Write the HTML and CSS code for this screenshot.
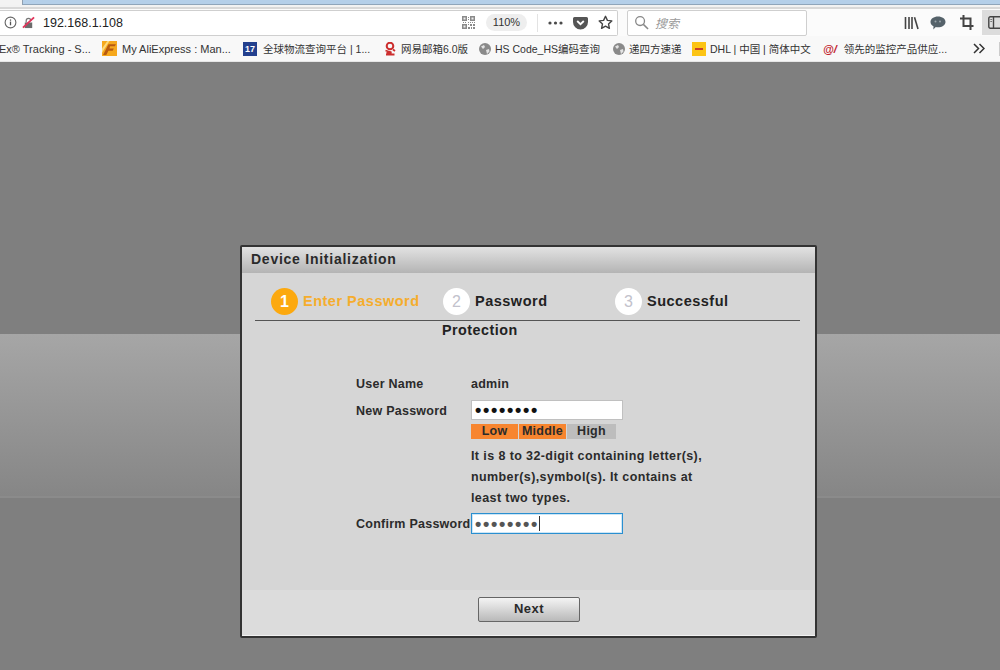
FILE: index.html
```html
<!DOCTYPE html>
<html lang="en">
<head>
<meta charset="utf-8">
<title>Device Initialization</title>
<link rel="stylesheet" href="styles.css">
</head>
<body>
<header class="browser">
  <div class="tabstrip"><div class="tabstrip-gap"></div><div class="tabstrip-blue"></div></div>
  <div class="navbar">
    <div class="urlbar">
      <svg class="ic-info" width="13" height="13" viewBox="0 0 14 14"><circle cx="7" cy="7" r="5.8" fill="none" stroke="#666" stroke-width="1.2"/><rect x="6.300" y="6" width="1.400" height="4" fill="#555"/><rect x="6.300" y="3.700" width="1.400" height="1.400" fill="#555"/></svg>
      <svg class="ic-lock" width="13" height="13" viewBox="0 0 14 14"><path d="M3 13V7h8v6z" fill="#6c6c6c"/><path d="M4.500 7V5a2.500 2.500 0 0 1 5 0" fill="none" stroke="#777" stroke-width="1.300"/><path d="M1 12.500 13 1.500" stroke="#e2335a" stroke-width="2"/></svg>
      <span class="url">192.168.1.108</span>
      <svg class="ic-qr" width="13" height="13" viewBox="0 0 13 13"><path d="M0 0h5v5H0zM8 0h5v5H8zM0 8h5v5H0z" fill="#8a8a8a"/><path d="M1.500 1.500h2v2h-2zM9.500 1.500h2v2h-2zM1.500 9.500h2v2h-2z" fill="#eee"/><path d="M6 1h1v1H6zM6 3h1v1H6zM1 6h1v1H1zM3 6h1v1H3zM6 6h1v1H6zM8 6h1v1H8zM10 6h1v1h-1zM12 6h1v1h-1zM6 8h1v1H6zM8 8h2v2H8zM11 8h2v2h-2zM6 11h2v2H6zM9 11h1v2H9zM11 11h2v2h-2z" fill="#8a8a8a"/></svg>
      <span class="zoom-pill">110%</span>
      <span class="url-sep"></span>
      <svg class="ic-dots" width="15" height="4" viewBox="0 0 15 4"><circle cx="2" cy="2" r="1.600" fill="#4a4a4a"/><circle cx="7.500" cy="2" r="1.600" fill="#4a4a4a"/><circle cx="13" cy="2" r="1.600" fill="#4a4a4a"/></svg>
      <svg class="ic-pocket" width="15" height="14" viewBox="0 0 15 14"><path d="M1.500 1h12A1.500 1.500 0 0 1 15 2.500V6a7.500 7.500 0 0 1-15 0V2.500A1.500 1.500 0 0 1 1.500 1z" fill="#555"/><path d="M4.200 5l3.300 3.200L10.800 5" fill="none" stroke="#fff" stroke-width="1.800"/></svg>
      <svg class="ic-star" width="15" height="15" viewBox="0 0 15 15"><path d="M7.500 1.300 9.400 5.400l4.400.5-3.300 3 .9 4.400-3.900-2.200-3.900 2.200.9-4.400-3.300-3 4.400-.5z" fill="none" stroke="#444" stroke-width="1.400" stroke-linejoin="round"/></svg>
    </div>
    <div class="searchbar">
      <svg width="15" height="15" viewBox="0 0 16 16"><circle cx="6.500" cy="6.500" r="4.700" fill="none" stroke="#888" stroke-width="1.400"/><path d="M10 10l5 5" stroke="#888" stroke-width="1.600"/></svg>
      <span class="search-text">搜索</span>
    </div>
    <div class="tools">
      <svg width="15" height="14" viewBox="0 0 15 14"><path d="M1.500 1v12M5 1v12M8 1v12" stroke="#444" stroke-width="1.600"/><path d="M10.500 1.300l3.500 11.700" stroke="#444" stroke-width="1.600"/></svg>
      <svg class="tool-chat" width="16" height="14" viewBox="0 0 16 14"><path d="M8 .5c4.200 0 7.500 2.400 7.500 5.400S12.200 11.300 8 11.300c-.8 0-1.500-.1-2.200-.2L3.300 13.500l.2-3.300C1.600 9.200.5 7.700.5 5.900.5 2.900 3.800.5 8 .5z" fill="#55626a"/><circle cx="5.500" cy="5.500" r="1" fill="#9aa5ab"/><circle cx="10" cy="5.500" r="1" fill="#9aa5ab"/></svg>
      <svg class="tool-crop" width="14" height="15" viewBox="0 0 14 15"><path d="M3.500 0v11h10M0 3.500h10.500V15" fill="none" stroke="#444" stroke-width="2"/></svg>
      <span class="tool-active"><svg width="14" height="13" viewBox="0 0 14 13"><rect x=".8" y=".8" width="12.400" height="11.400" rx="1.500" fill="none" stroke="#444" stroke-width="1.400"/><path d="M5.500 1v11" stroke="#444" stroke-width="1.400"/><path d="M2.300 3.500h1.800M2.300 5.500h1.800" stroke="#777"/></svg></span>
    </div>
  </div>
  <nav class="bookmarks">
    <span class="bm bm-cut">Ex® Tracking - S...</span>
    <span class="bm bm-ali"><svg width="15" height="15" viewBox="0 0 14 14"><rect width="14" height="14" fill="#f6a81c"/><path d="M1 13 6 3h7l-1 2H7.500L7 7h4l-1 2H6l-2 4z" fill="#b85a10"/><path d="M0 7l5-7h2L0 11z" fill="#fcd97e"/></svg>My AliExpress : Man...</span>
    <span class="bm bm-17"><span class="fav17">17</span>全球物流查询平台 | 1...</span>
    <span class="bm bm-163"><svg width="12" height="14" viewBox="0 0 11 14"><circle cx="5.500" cy="4" r="3.300" fill="none" stroke="#cc2e2e" stroke-width="2"/><path d="M1 8.500l6 2-5 .5M1.500 12.500h8.500M8.500 7.500l2 1.500" fill="none" stroke="#cc2e2e" stroke-width="1.800"/></svg>网易邮箱6.0版</span>
    <span class="bm bm-hs"><svg class="globe" width="12" height="12" viewBox="0 0 12 12"><circle cx="6" cy="6" r="6" fill="#8a8a8a"/><path d="M2 3.500 5 2l1 2-2 2zM7 7l3-1 .5 2.500L8 11z" fill="#e3e3e3"/></svg>HS Code_HS编码查询</span>
    <span class="bm bm-4px"><svg class="globe" width="12" height="12" viewBox="0 0 12 12"><circle cx="6" cy="6" r="6" fill="#8a8a8a"/><path d="M2 3.500 5 2l1 2-2 2zM7 7l3-1 .5 2.500L8 11z" fill="#e3e3e3"/></svg>递四方速递</span>
    <span class="bm bm-dhl"><span class="favdhl"></span>DHL | 中国 | 简体中文</span>
    <span class="bm bm-ai"><span class="favai">@/</span>领先的监控产品供应...</span>
    <span class="bm-more">
      <svg width="12" height="11" viewBox="0 0 12 11"><path d="M1 1l4.500 4.500L1 10M6.500 1 11 5.500 6.500 10" fill="none" stroke="#333" stroke-width="1.500"/></svg>
    </span>
    <span class="bm-edge"></span>
  </nav>
</header>

<main class="stage">
  <div class="stage-top"></div>
  <div class="stage-band"></div>
  <div class="stage-bottom"></div>

  <section class="dialog">
    <h1 class="dialog-title">Device Initialization</h1>
    <div class="dialog-body">
      <div class="steps">
        <div class="step step-active"><span class="step-num">1</span><span class="step-label">Enter Password</span></div>
        <div class="step"><span class="step-num">2</span><span class="step-label">Password<span class="step-wrap">Protection</span></span></div>
        <div class="step"><span class="step-num">3</span><span class="step-label">Successful</span></div>
      </div>
      <div class="form">
        <span class="lbl lbl-user">User Name</span>
        <span class="val">admin</span>
        <span class="lbl lbl-field">New Password</span>
        <div class="field-group">
          <div class="input">••••••••</div>
          <div class="meter"><span class="m-low">Low</span><span class="m-mid">Middle</span><span class="m-high">High</span></div>
          <p class="hint">It is 8 to 32-digit containing letter(s),<br>number(s),symbol(s). It contains at<br>least two types.</p>
        </div>
        <span class="lbl lbl-field">Confirm Password</span>
        <div class="input input-focus"><span>••••••••</span><i class="caret"></i></div>
      </div>
    </div>
    <footer class="dialog-foot"><button class="btn" type="button">Next</button></footer>
  </section>
</main>
</body>
</html>
```

FILE: styles.css
```css
* { box-sizing: border-box; }
html, body { margin: 0; height: 100%; overflow: hidden; }
body { width: 1000px; height: 670px; font-family: "Liberation Sans", Arial, sans-serif; display: flex; flex-direction: column; background: #808080; }

.browser { height: 62px; flex: none; background: #f8f8f8; display: flex; flex-direction: column; }
.tabstrip { height: 9px; flex: none; display: flex; background: #f2f2f2; border-bottom: 2px solid #d8d8d8; }
.tabstrip-gap { width: 22px; height: 5px; background: #f3f3f3; }
.tabstrip-blue { flex: 1; height: 5px; background: #b4cfe9; border-left: 1px solid #8f9fb0; border-bottom: 1px solid #8fa5ba; }

.navbar { height: 27px; flex: none; display: flex; align-items: center; background: #fbfbfb; }
.urlbar { width: 618px; height: 26px; background: #fff; border: 1px solid #cfcfcf; border-left: 0; border-radius: 0 2px 2px 0; display: flex; align-items: center; padding-left: 4px; flex: none; }
.ic-lock { margin-left: 5px; }
.url { margin-left: 8px; font-size: 12.500px; color: #222; flex: 1; }
.ic-qr { margin-right: 11px; }
.zoom-pill { width: 41px; height: 17px; border-radius: 9px; background: #eeeeee; color: #333; font-size: 11px; line-height: 17px; text-align: center; }
.url-sep { width: 1px; height: 18px; background: #e3e3e3; margin: 0 10px; }
.ic-dots { margin-right: 10px; }
.ic-pocket { margin-right: 10px; }
.ic-star { margin-right: 4px; }
.searchbar { width: 180px; height: 26px; margin-left: 9px; background: #fff; border: 1px solid #cfcfcf; border-radius: 2px; display: flex; align-items: center; gap: 6px; padding-left: 6px; flex: none; }
.search-text { font-family: "Noto Sans CJK SC", sans-serif; font-style: italic; font-size: 12px; color: #9a9a9a; }
.tools { flex: 1; display: flex; align-items: center; padding-left: 97px; }
.tool-chat { margin-left: 11px; }
.tool-crop { margin-left: 14px; }
.tool-active { margin-left: 8px; width: 19px; height: 25px; background: #dcdcdc; display: flex; align-items: center; padding-left: 6px; overflow: hidden; flex: none; }
.tool-active svg { flex: none; }

.bookmarks { height: 26px; flex: none; background: #f8f8f8; display: flex; align-items: center; font-family: "Liberation Sans", "Noto Sans CJK SC", sans-serif; font-size: 10.500px; color: #333; white-space: nowrap; position: relative; border-bottom: 1px solid #e6e6e6; }
.bm { display: flex; align-items: center; gap: 5px; flex: none; }
.bm-cut { width: 103px; margin-left: -1px; font-size: 11px; }
.bm-ali { width: 141px; gap: 5px; font-size: 11px; }
.bm-17 { width: 141px; gap: 6px; }
.bm-163 { width: 95px; gap: 5px; }
.bm-hs { width: 134px; gap: 4px; }
.bm-4px { width: 79px; gap: 4px; }
.bm-dhl { width: 131px; gap: 4px; }
.bm-ai { width: 150px; gap: 7px; }
.bm-more { width: 26px; display: flex; }
.bm-edge { width: 1px; height: 14px; background: #ccc; }
.fav17 { width: 14px; height: 14px; background: #23408e; color: #fff; font-size: 9px; font-weight: bold; text-align: center; line-height: 14px; }
.favdhl { width: 14px; height: 14px; background: #fcc415; position: relative; display: block; }
.favdhl::after { content: ""; position: absolute; left: 3px; right: 3px; top: 6px; height: 2px; background: #c8402a; }
.favai { color: #c0202a; font-weight: bold; font-style: italic; font-size: 11px; }

.stage { flex: 1; display: flex; flex-direction: column; position: relative; }
.stage-top { height: 272px; flex: none; background: #7f7f7f; }
.stage-band { height: 164px; flex: none; background: linear-gradient(#a6a6a6, #868686); border-bottom: 2px solid #8b8b8b; }
.stage-bottom { flex: 1; background: #7f7f7f; }

.dialog { position: absolute; left: 240px; top: 183px; width: 577px; height: 393px; border: 2px solid #333; border-radius: 2px; background: #d6d6d6; display: flex; flex-direction: column; color: #2b2b2b; }
.dialog-title { margin: 0; height: 26px; flex: none; padding-left: 9px; font-size: 14px; line-height: 24px; font-weight: bold; letter-spacing: .75px; background: linear-gradient(#e2e2e2, #b4b4b4); color: #2a2a2a; }
.dialog-body { flex: 1; padding: 0 15px 0 13px; font-weight: bold; font-size: 12.500px; letter-spacing: .25px; }
.steps { height: 48px; border-bottom: 1px solid #555; display: grid; grid-template-columns: 172px 172px 1fr; padding-left: 16px; }
.step { display: flex; align-items: flex-start; padding-top: 15px; gap: 5px; }
.step-num { width: 27px; height: 27px; flex: none; border-radius: 50%; background: #fff; color: #c2c2cc; font-size: 16px; font-weight: normal; line-height: 27px; text-align: center; letter-spacing: 0; }
.step-label { font-size: 14.500px; letter-spacing: .5px; line-height: 27px; white-space: nowrap; position: relative; color: #222; }
.step-wrap { position: absolute; left: -33px; top: 29px; font-size: 14.300px; }
.step-active .step-num { background: #fca90f; color: #fff; font-weight: bold; }
.step-active .step-label { color: #f5ad2d; }

.form { margin: 56px 0 0 101px; display: grid; grid-template-columns: 115px 152px; align-items: start; }
.lbl, .val { line-height: 15px; }
.lbl-user, .val { margin-bottom: 8px; }
.lbl-field { padding-top: 4px; }
.field-group { display: flex; flex-direction: column; }
.input { width: 152px; height: 20px; background: #fff; border: 1px solid #c0c0c0; padding-left: 3px; font-size: 18px; line-height: 18px; letter-spacing: 1.700px; color: #111; display: flex; align-items: center; overflow: hidden; }
.input-focus { border: 1px solid #2a8fd0; color: #555; box-shadow: inset 0 0 0 1px #cde6f6; height: 21px; }
.caret { width: 1px; height: 15px; background: #333; display: block; }
.meter { width: 145px; height: 15px; margin-top: 4px; display: flex; line-height: 15px; text-align: center; }
.m-low { width: 47px; background: #f7852f; }
.m-mid { width: 47px; margin-left: 1px; background: #f7852f; }
.m-high { flex: 1; margin-left: 1px; background: #bdbdbd; }
.hint { margin: 7px 0 4px; width: 260px; line-height: 21px; white-space: nowrap; letter-spacing: .4px; }

.dialog-foot { height: 46px; flex: none; background: #dcdcdc; border-bottom: 1px solid #f2f2f2; display: flex; justify-content: center; align-items: flex-start; padding-top: 7px; padding-left: 1px; }
.btn { width: 102px; height: 25px; border: 1px solid #666; border-radius: 2px; background: linear-gradient(#f4f4f4, #b9b9b9); font: bold 13px "Liberation Sans", Arial, sans-serif; letter-spacing: .5px; color: #2a2a2a; padding: 0 0 2px; }
```
